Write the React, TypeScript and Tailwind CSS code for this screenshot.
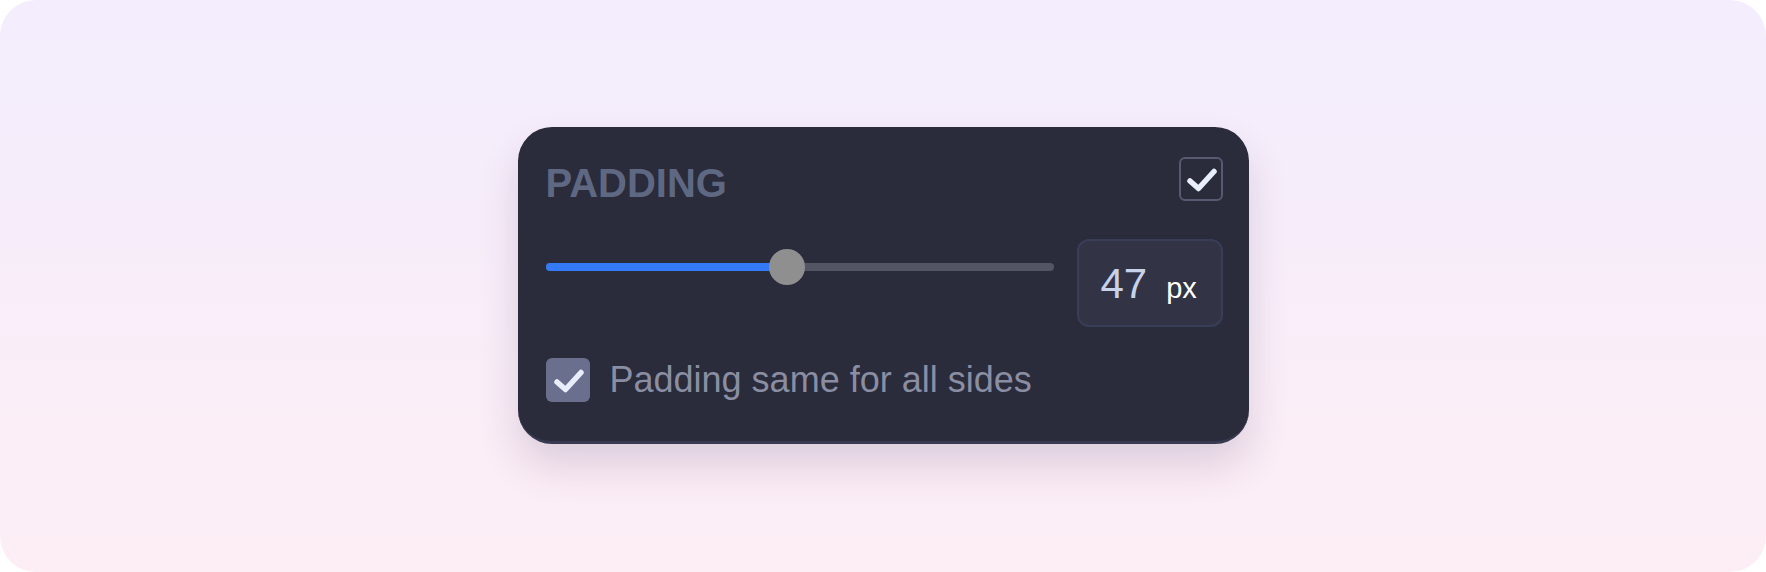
const CheckIcon = () => (
  <svg className="h-[44px] w-[44px]" fill="none" viewBox="0 0 44 44">
    <path
      d="M11 24 L19.5 31.5 L35 14.5"
      stroke="#e8eefb"
      strokeLinecap="round"
      strokeLinejoin="round"
      strokeWidth="5.5"
    />
  </svg>
);

const VALUE = 47;
const PERCENT = (786 - 545) / 508;

export default function App() {
  return (
    <div
      className="flex h-[572px] w-[1766px] items-start justify-center rounded-[36px] bg-gradient-to-b from-[#f3edfd] to-[#fdeef5] pt-[127px]"
      style={{ fontFamily: '"Liberation Sans", Arial, sans-serif' }}
    >
      <div className="h-[317px] w-[731px] rounded-[34px] border-b-[3px] border-[#373a50] bg-[#2a2b3b] pl-[28px] pr-[26px] pt-[30px] shadow-[0_22px_40px_rgba(70,40,90,0.16)]">
        <div className="flex items-start justify-between">
          <h2 className="mt-[6px] text-[40px] leading-[40px] font-bold text-[#5f6883]">
            PADDING
          </h2>
          <div className="flex h-[44px] w-[44px] items-center justify-center rounded-[6px] border-2 border-[#575a71]">
            <div className="-m-[2px]">
              <CheckIcon />
            </div>
          </div>
        </div>

        <div className="mt-[36px] flex items-start gap-[23px]">
          <div className="relative mt-[24px] h-[8px] w-[508px] rounded-full bg-[#535565]">
            <div
              className="h-full rounded-full bg-[#3479f5]"
              style={{ width: `${PERCENT * 100}%` }}
            />
            <div
              className="absolute top-1/2 h-[36px] w-[36px] -translate-x-1/2 -translate-y-1/2 rounded-full bg-[#8f8f8f]"
              style={{ left: `${PERCENT * 100}%` }}
            />
          </div>
          <div className="flex h-[88px] w-[146px] items-center rounded-[12px] border-2 border-[#383d58] bg-[#323446] pl-[22px]">
            <div className="mt-[2px] flex items-baseline gap-[19px]">
              <span className="text-[42px] leading-none text-[#c7d2ea]">{VALUE}</span>
              <span className="text-[29px] leading-none text-white">px</span>
            </div>
          </div>
        </div>

        <div className="mt-[31px] flex items-center gap-[20px]">
          <div className="flex h-[44px] w-[44px] items-center justify-center rounded-[6px] bg-[#6b6f8e]">
            <CheckIcon />
          </div>
          <span className="text-[36px] leading-none text-[#8a8ea3]">
            Padding same for all sides
          </span>
        </div>
      </div>
    </div>
  );
}
